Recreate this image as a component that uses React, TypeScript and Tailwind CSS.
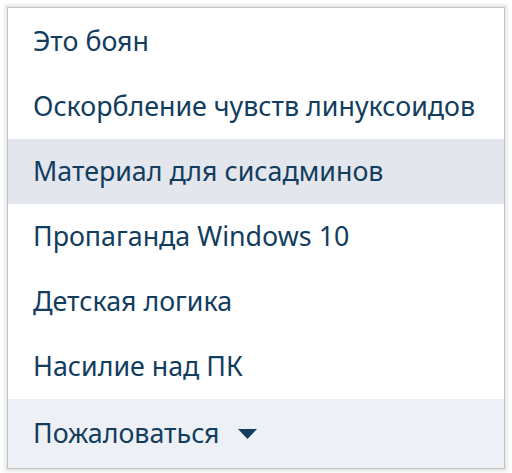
export default function App() {
  const items = [
    "Это боян",
    "Оскорбление чувств линуксоидов",
    "Материал для сисадминов",
    "Пропаганда Windows 10",
    "Детская логика",
    "Насилие над ПК",
  ];
  return (
    <div className="w-[512px] h-[473px] bg-white p-[7px] font-['Noto_Sans',sans-serif]">
      <div className="h-[462px] border border-[#c4c4c4] shadow-[0_0_4px_2px_rgba(0,0,0,0.12)] bg-white flex flex-col pt-[1px]">
        {items.map((t, i) => (
          <div
            key={t}
            className={
              "h-[65px] flex items-center pl-[25px] text-[26.8px] text-[#123d5e] " +
              (i === 2 ? "bg-[#e3e6ed]" : "")
            }
          >
            {t}
          </div>
        ))}
        <div className="flex-1 flex items-center gap-[18px] pl-[25px] bg-[#edf0f5] text-[26.8px] text-[#123d5e]">
          <span>Пожаловаться</span>
          <svg width="19" height="10" viewBox="0 0 19 10">
            <path d="M0 0 L19 0 L9.5 10 Z" fill="#123d5e" />
          </svg>
        </div>
      </div>
    </div>
  );
}
